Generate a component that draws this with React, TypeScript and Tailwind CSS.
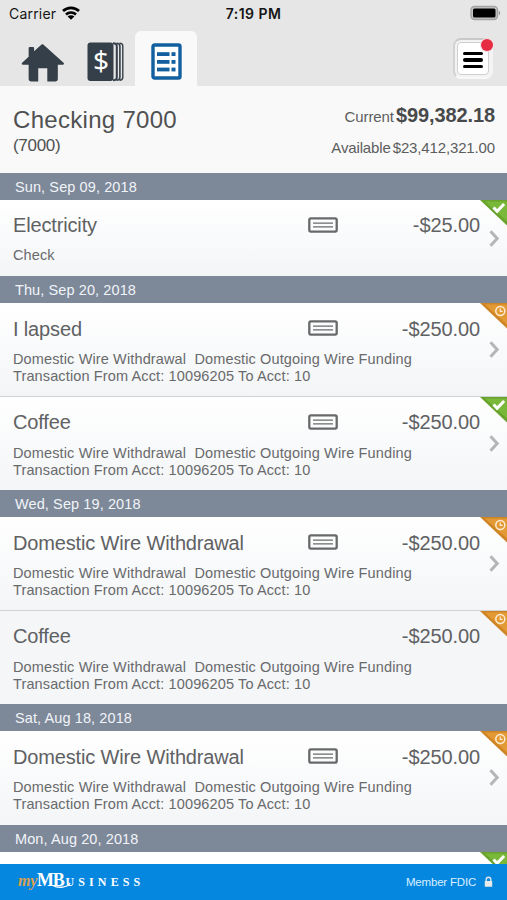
/*
  ACCOUNT ACTIVITY — transaction list for a single account

  Top-to-bottom:
  1. Status bar (carrier, time, battery)
  2. Tab bar (home / accounts / activity) and menu button
  3. Account summary
  4. Transactions grouped by day
  5. Branded footer
*/

import clsx from "clsx";

type Status = "posted" | "pending";

interface Transaction {
  title: string;
  amount: string;
  details: string[];
  status: Status;
  hasDocument: boolean;
}

interface Day {
  date: string;
  transactions: Transaction[];
}

const wireDetails = [
  "Domestic Wire Withdrawal  Domestic Outgoing Wire Funding",
  "Transaction From Acct: 10096205 To Acct: 10",
];

const days: Day[] = [
  {
    date: "Sun, Sep 09, 2018",
    transactions: [
      { title: "Electricity", amount: "-$25.00", details: ["Check"], status: "posted", hasDocument: true },
    ],
  },
  {
    date: "Thu, Sep 20, 2018",
    transactions: [
      { title: "I lapsed", amount: "-$250.00", details: wireDetails, status: "pending", hasDocument: true },
      { title: "Coffee", amount: "-$250.00", details: wireDetails, status: "posted", hasDocument: true },
    ],
  },
  {
    date: "Wed, Sep 19, 2018",
    transactions: [
      { title: "Domestic Wire Withdrawal", amount: "-$250.00", details: wireDetails, status: "pending", hasDocument: true },
      { title: "Coffee", amount: "-$250.00", details: wireDetails, status: "pending", hasDocument: false },
    ],
  },
  {
    date: "Sat, Aug 18, 2018",
    transactions: [
      { title: "Domestic Wire Withdrawal", amount: "-$250.00", details: wireDetails, status: "pending", hasDocument: true },
    ],
  },
  {
    date: "Mon, Aug 20, 2018",
    transactions: [
      { title: "", amount: "", details: [], status: "posted", hasDocument: false },
    ],
  },
];

function WifiIcon() {
  return (
    <svg viewBox="0 0 18 14" className="mt-px h-[14px] w-[18px]" fill="none" stroke="#000" strokeWidth="2.7">
      <path d="M1 5.1a11.7 11.7 0 0 1 16 0" />
      <path d="M4 8.5a7.3 7.3 0 0 1 10 0" />
      <path d="M9 13.8 5.6 10.6a4.9 4.9 0 0 1 6.8 0Z" fill="#000" stroke="none" />
    </svg>
  );
}

function BatteryIcon() {
  return (
    <svg viewBox="0 0 31 16" className="h-4 w-[31px]">
      <rect x="1" y="1.500" width="26.500" height="13" rx="3.500" fill="#c4c4c4" stroke="#a3a3a3" strokeWidth="1.400" />
      <path d="M28.800 5.700c1.800.6 1.800 4 0 4.600Z" fill="#999" />
      <rect x="3" y="3.500" width="22.500" height="9" rx="1.600" fill="#000" />
    </svg>
  );
}

function HomeIcon() {
  return (
    <svg viewBox="0 0 46 40" className="h-10 w-[46px]">
      <path
        d="M21.500.7c.6-.4 1.200-.4 1.800 0L44.500 19.800c.8.8.5 1.900-.8 1.900h-5.200v14.800a2.800 2.800 0 0 1-2.800 2.800H27.500V25.600H18v13.700h-7.200A2.800 2.800 0 0 1 8 36.500V21.700H2c-1.300 0-1.600-1.100-.8-1.900L8 13.500V4.300c0-.7.400-1.100 1.100-1.100h3.500c.7 0 1.100.4 1.100 1.100v3.400Z"
        fill="#343f49"
      />
    </svg>
  );
}

function AccountsIcon() {
  return (
    <svg viewBox="0 0 37 40" className="h-10 w-[37px]">
      <rect x="0.500" y="0.500" width="26" height="38.500" rx="3" fill="#343f49" />
      <g fill="none" stroke="#343f49">
        <path d="M26 1.200q3.800 0 3.800 3v31.100q0 3-3.800 3" strokeWidth="2" />
        <path d="M29.500 1.200q3.400 0 3.400 3v31.100q0 3-3.400 3" strokeWidth="1.600" />
        <path d="M32.500 1.200q3.300 0 3.300 3v31.100q0 3-3.300 3" strokeWidth="1.400" />
      </g>
      <text x="14" y="29" textAnchor="middle" fontSize="28" fill="#fff" fontFamily="'Noto Sans', sans-serif">
        $
      </text>
    </svg>
  );
}

function ActivityIcon() {
  return (
    <svg viewBox="0 0 31 37" className="h-[37px] w-[31px]">
      <rect x="2" y="2" width="27" height="33" rx="1.500" fill="#fff" stroke="#12609f" strokeWidth="3.400" />
      <g fill="#12609f">
        <rect x="6" y="9.200" width="12.500" height="3.800" />
        <rect x="20.500" y="9.200" width="4" height="3.800" />
        <rect x="6" y="17" width="12.500" height="3.800" />
        <rect x="20.500" y="17" width="4" height="3.800" />
        <rect x="6" y="24.600" width="12.500" height="3.800" />
        <rect x="20.500" y="24.600" width="4" height="3.800" />
      </g>
    </svg>
  );
}

function DocumentIcon() {
  return (
    <svg viewBox="0 0 30 16" className="-mt-px h-4 w-[30px]" fill="none" stroke="#68696b">
      <rect x="1.300" y="1.300" width="27.400" height="13.400" rx="1.600" strokeWidth="2.300" />
      <path d="M5 6.200h20M5 9.800h20" strokeWidth="1.300" />
    </svg>
  );
}

function Chevron() {
  return (
    <svg viewBox="0 0 11 17" className="h-[17px] w-[11px]" fill="none" stroke="#b3b5b7" strokeWidth="3">
      <path d="m1.500 1.200 6.700 7.300-6.700 7.300" />
    </svg>
  );
}

function StatusCorner({ status }: { status: Status }) {
  if (status === "posted") {
    return (
      <svg viewBox="0 0 27 26" className="absolute top-0 right-0 h-[26px] w-[27px]">
        <path d="M0 0h27v25.500Z" fill="#68a32b" />
        <path d="M5 1.500h22v20Z" fill="#7ab83a" />
        <path d="m13.500 7.500 3.600 3.800 7-7.300" fill="none" stroke="#fff" strokeWidth="3" />
      </svg>
    );
  }
  return (
    <svg viewBox="0 0 27 26" className="absolute top-0 right-0 h-[26px] w-[27px]">
      <path d="M0 0h27v25.500Z" fill="#cf8526" />
      <path d="M5 1.500h22v20Z" fill="#e39a35" />
      <circle cx="20.300" cy="8" r="4.500" fill="none" stroke="#fdebd0" strokeWidth="1.500" />
      <path d="M20.300 5.500v2.900h2.400" fill="none" stroke="#fdebd0" strokeWidth="1.200" />
    </svg>
  );
}

function TransactionRow({ transaction, isLast }: { transaction: Transaction; isLast: boolean }) {
  const { title, amount, details, status, hasDocument } = transaction;

  return (
    <li
      className={clsx(
        "relative shrink-0 pl-[13px]",
        details.length === 1 ? "h-[76px]" : "h-[93.5px]",
        !isLast && "border-b border-[#cfd3d5]",
        hasDocument ? "bg-linear-to-b from-white to-[#f3f5f7]" : title ? "bg-[#f4f6f8]" : "bg-white",
      )}
    >
      <div
        className={clsx(
          "flex items-center text-[20px] text-[#606163]",
          details.length === 1 ? "h-[50px]" : "h-[51px]",
        )}
      >
        <span className="flex-1 tracking-[-0.15px]">{title}</span>
        {hasDocument && <DocumentIcon />}
        <span className="mr-[27px] w-[142px] text-right tracking-[-0.1px]">{amount}</span>
      </div>
      <div className="-mt-[3px] text-[14.5px] leading-[17px] tracking-[0.13px] whitespace-pre text-[#696a6c]">
        {details.map((line) => (
          <p key={line}>{line}</p>
        ))}
      </div>
      {hasDocument && (
        <div className="absolute inset-y-0 right-[7px] flex items-center">
          <Chevron />
        </div>
      )}
      <StatusCorner status={status} />
    </li>
  );
}

export default function App() {
  return (
    <div className="flex h-[900px] w-[507px] flex-col overflow-hidden bg-[#f9f9f9] font-['Liberation_Sans',Arial,sans-serif]">
      {/* ── STATUS BAR ── */}
      <header className="h-[86px] shrink-0 bg-[#e6e6e6]">
        <div className="grid h-[31px] grid-cols-3 items-start pt-[5px] font-['Inter',sans-serif] text-[14px] leading-[18px] text-[#151515]">
          <div className="flex gap-[6px] pl-[9px]">
            <span className="tracking-[0.2px]">Carrier</span>
            <WifiIcon />
          </div>
          <span className="text-center font-semibold tracking-[0.45px]">7:19 PM</span>
          <div className="flex justify-end pr-[6px]">
            <BatteryIcon />
          </div>
        </div>

        {/* ── TABS ── */}
        <div className="flex h-[55px]">
          <nav className="flex flex-1">
            <a className="flex w-[65px] pt-[12px] pl-[21px]">
              <HomeIcon />
            </a>
            <a className="flex w-[70px] pt-[11px] pl-[22px]">
              <AccountsIcon />
            </a>
            <a className="flex w-[62px] justify-center rounded-t-[6px] bg-[#f9f9f9] pt-[12px]">
              <ActivityIcon />
            </a>
          </nav>
          <div className="relative mt-[7px] mr-[14px] h-[41px] w-10 rounded-lg border-2 border-t-[#c9c9c9] border-r-[#f4f4f4] border-b-[#f7f7f7] border-l-[#d2d2d2] bg-[#f3f3f3] p-[2px]">
            <div className="flex h-full flex-col items-center justify-center gap-[3px] rounded-[4px] border border-[#d0d0d0] bg-white pt-[3px]">
              <span className="h-[3.5px] w-[20px] rounded-full bg-black" />
              <span className="h-[3.5px] w-[20px] rounded-full bg-black" />
              <span className="h-[3.5px] w-[20px] rounded-full bg-black" />
            </div>
            <span className="absolute -top-[1px] -right-[2px] h-3 w-3 rounded-full bg-[#e52c40] ring-1 ring-[#f3dfe1]" />
          </div>
        </div>
      </header>

      {/* ── ACCOUNT SUMMARY ── */}
      <section className="flex h-[87px] shrink-0 justify-between pr-[12px] pl-[13px] text-[#505152]">
        <div className="pt-[19px]">
          <h1 className="text-[24px] leading-[29px] tracking-[0.3px]">Checking 7000</h1>
          <p className="mt-px text-[17px] leading-[22px] tracking-[-0.3px]">(7000)</p>
        </div>
        <div className="pt-[17px] text-right text-[15px] text-[#5c5d5e]">
          <p className="leading-[24px]">
            <span className="tracking-[-0.1px]">Current</span>{" "}
            <strong className="-ml-[2px] text-[20px] tracking-[-0.12px] text-[#48494a]">$99,382.18</strong>
          </p>
          <p className="mt-[8px] leading-[22px] tracking-[-0.14px]">
            Available <span className="-ml-[2px]">$23,412,321.00</span>
          </p>
        </div>
      </section>

      {/* ── TRANSACTIONS ── */}
      <main className="flex min-h-0 flex-1 flex-col overflow-hidden">
        {days.map((day) => (
          <section key={day.date} className="shrink-0">
            <h2 className="h-[27px] bg-[#7d8898] pl-[15px] text-[14.5px] leading-[28px] tracking-[0.1px] text-[#f1f4f9]">
              {day.date}
            </h2>
            <ul>
              {day.transactions.map((transaction, i) => (
                <TransactionRow
                  key={i}
                  transaction={transaction}
                  isLast={i === day.transactions.length - 1}
                />
              ))}
            </ul>
          </section>
        ))}
      </main>

      {/* ── FOOTER ── */}
      <footer className="flex h-9 shrink-0 items-center justify-between bg-[#0587df] pr-[14px] pl-[18px] text-white">
        <div className="relative -mt-[3px] flex items-baseline font-['Liberation_Serif',serif] font-bold">
          <span className="text-[16px] tracking-[-0.3px] text-[#d9a052] italic">my</span>
          <span className="text-[18px] tracking-[-1.2px]">MB</span>
          <span className="ml-[2px] text-[12px] tracking-[4.1px]">USINESS</span>
          <svg viewBox="0 0 22 9" className="absolute top-[13px] left-[34px] h-[9px] w-[22px]" fill="none" stroke="#fff">
            <path d="M1 5.500c5 3 15 2 17-2.500" strokeWidth="1.300" />
          </svg>
        </div>
        <div className="flex items-center gap-[8px] text-[11.5px] text-[#d9efff]">
          <span className="mt-px tracking-[-0.2px]">Member FDIC</span>
          <svg viewBox="0 0 9 12" className="h-3 w-[9px]">
            <path d="M2.200 6V3.500a2.300 2.300 0 0 1 4.600 0V6" fill="none" stroke="#dfe6ec" strokeWidth="1.400" />
            <rect x="0.800" y="5" width="7.400" height="5.800" rx="0.600" fill="#e9e9e9" />
          </svg>
        </div>
      </footer>
    </div>
  );
}
